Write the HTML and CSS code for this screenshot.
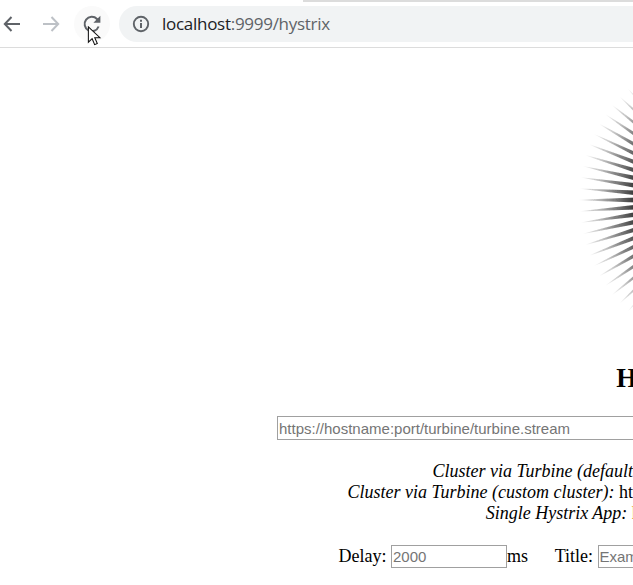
FILE: index.html
```html
<!DOCTYPE html>
<html lang="en">
<head>
    <meta charset="UTF-8">
    <title>Hystrix Dashboard</title>
    <link rel="stylesheet" href="styles.css">
</head>
<body>
    <div class="toolbar">
        <div class="tab-edge"></div>
        <svg class="nav-icon" viewBox="0 0 20 20"><path d="M18 10H3M9.500 3 2.800 10l6.700 7" fill="none" stroke="#5f6368" stroke-width="2"/></svg>
        <svg class="nav-icon" viewBox="0 0 20 20"><path d="M2 10h15M10.500 3l6.700 7-6.700 7" fill="none" stroke="#bdc1c6" stroke-width="2"/></svg>
        <div class="reload">
            <svg class="reload-icon" viewBox="0 0 20 20"><path d="M16.600 12.500A7.200 7.200 0 1 1 15 5l1.600 1.800" fill="none" stroke="#5f6368" stroke-width="2"/><path d="M18.400 1.800v7h-7z" fill="#5f6368"/></svg>
        </div>
        <div class="omnibox">
            <svg class="info-icon" viewBox="0 0 18 18"><circle cx="9" cy="9" r="7.200" fill="none" stroke="#5f6368" stroke-width="1.900"/><path d="M8 8h2v5H8zM8 4.800h2v2H8z" fill="#5f6368"/></svg>
            <span class="host">localhost<span class="url-rest">:9999/hystrix</span></span>
        </div>
        <svg class="cursor" viewBox="0 0 16 24"><path d="M1 1v17.500l4.300-4 2.900 6.800 3-1.300-2.900-6.600h5.900z" fill="#fff" stroke="#111" stroke-width="1.200"/></svg>
    </div>

    <div class="page">
        <svg class="logo" viewBox="0 0 297 262">
            <defs>
                <linearGradient id="ray-fade" gradientUnits="userSpaceOnUse" x1="0" y1="0" x2="58" y2="0">
                    <stop offset="0" stop-color="#1a1a1a" stop-opacity="0"/>
                    <stop offset="0.25" stop-color="#1a1a1a" stop-opacity="0.22"/>
                    <stop offset="0.6" stop-color="#1a1a1a" stop-opacity="0.55"/>
                    <stop offset="1" stop-color="#1a1a1a" stop-opacity="0.9"/>
                </linearGradient>
                <polygon id="ray" points="0,142.800 0,143.200 70,145.900 70,140.100" fill="url(#ray-fade)"/>
                <filter id="soft"><feGaussianBlur stdDeviation="0.700"/></filter>
            </defs>
            <g filter="url(#soft)">
                <use href="#ray" transform="rotate(-47.300 151.500 143)"/>
                <use href="#ray" transform="rotate(-43 151.500 143)"/>
                <use href="#ray" transform="rotate(-38.700 151.500 143)"/>
                <use href="#ray" transform="rotate(-34.400 151.500 143)"/>
                <use href="#ray" transform="rotate(-30.100 151.500 143)"/>
                <use href="#ray" transform="rotate(-25.800 151.500 143)"/>
                <use href="#ray" transform="rotate(-21.500 151.500 143)"/>
                <use href="#ray" transform="rotate(-17.200 151.500 143)"/>
                <use href="#ray" transform="rotate(-12.900 151.500 143)"/>
                <use href="#ray" transform="rotate(-8.600 151.500 143)"/>
                <use href="#ray" transform="rotate(-4.300 151.500 143)"/>
                <use href="#ray"/>
                <use href="#ray" transform="rotate(4.300 151.500 143)"/>
                <use href="#ray" transform="rotate(8.600 151.500 143)"/>
                <use href="#ray" transform="rotate(12.900 151.500 143)"/>
                <use href="#ray" transform="rotate(17.200 151.500 143)"/>
                <use href="#ray" transform="rotate(21.500 151.500 143)"/>
                <use href="#ray" transform="rotate(25.800 151.500 143)"/>
                <use href="#ray" transform="rotate(30.100 151.500 143)"/>
                <use href="#ray" transform="rotate(34.400 151.500 143)"/>
                <use href="#ray" transform="rotate(38.700 151.500 143)"/>
                <use href="#ray" transform="rotate(43 151.500 143)"/>
                <use href="#ray" transform="rotate(47.300 151.500 143)"/>
            </g>
        </svg>
        <h2 class="title">Hystrix Dashboard</h2>
        <input class="stream-input" type="text" placeholder="https://hostname:port/turbine/turbine.stream">
        <div class="hints">
            <div><i>Cluster via Turbine (default cluster):</i> https://turbine-hostname:port/turbine.stream</div>
            <div><i>Cluster via Turbine (custom cluster):</i> https://turbine-hostname:port/turbine.stream?cluster=[clusterName]</div>
            <div><i>Single Hystrix App:</i> <span class="app-url">https://hystrix-app:port/actuator/hystrix.stream</span></div>
        </div>
        <div class="options">
            Delay: <input class="delay-input" type="text" placeholder="2000">ms
            &nbsp;&nbsp;&nbsp;&nbsp;
            Title: <input class="title-input" type="text" placeholder="Example Hystrix App">
        </div>
    </div>
</body>
</html>
```

FILE: styles.css
```css
html, body {
    height: 100%;
    overflow: hidden;
}
body {
    margin: 0;
    background-color: #fff;
    font-family: "Liberation Serif", serif;
    font-size: 18px;
    color: #000;
}
.toolbar {
    position: relative;
    display: flex;
    align-items: center;
    height: 47px;
    border-bottom: 1px solid #dcdcdc;
    padding-left: 2px;
}
.tab-edge {
    position: absolute;
    top: 0;
    left: 303px;
    right: 0;
    height: 2px;
    background-color: #dcdcdc;
}
.nav-icon {
    flex: none;
    width: 20px;
    height: 20px;
    margin-right: 19px;
}
.reload {
    flex: none;
    display: flex;
    align-items: center;
    justify-content: center;
    width: 36px;
    height: 36px;
    margin-left: -6px;
    border-radius: 50%;
    background-color: #fafafa;
}
.reload-icon {
    width: 20px;
    height: 20px;
}
.omnibox {
    display: flex;
    align-items: center;
    flex: none;
    width: 600px;
    height: 36px;
    margin-left: 9px;
    padding-left: 13px;
    border-radius: 18px;
    background-color: #f1f3f4;
}
.info-icon {
    flex: none;
    width: 18px;
    height: 18px;
    margin-right: 12px;
}
.host {
    font-family: "Open Sans", sans-serif;
    font-size: 17px;
    letter-spacing: -0.28px;
    color: #202124;
}
.url-rest {
    color: #5f6368;
}
.cursor {
    position: absolute;
    left: 87px;
    top: 26px;
    width: 15px;
    height: 21px;
}
.page {
    width: 1454px;
    padding-top: 9px;
    text-align: center;
}
.logo {
    display: block;
    width: 297px;
    height: 262px;
    margin: 0 auto;
}
.title {
    margin: 44px 0 22px;
    font-size: 27px;
    line-height: 31px;
}
input {
    box-sizing: border-box;
    border: 1px solid #a0a0a0;
    padding: 1px;
    font-family: "Liberation Sans", sans-serif;
    font-size: 15px;
    background-color: #fff;
}
input::placeholder {
    color: #757575;
}
.stream-input {
    display: block;
    width: 900px;
    height: 24px;
    margin: 0 auto;
}
.hints {
    margin-top: 21px;
    line-height: 21px;
}
.app-url {
    color: #e8890c;
}
.options {
    margin-top: 21px;
    white-space: nowrap;
}
.delay-input {
    width: 116px;
    height: 23px;
}
.title-input {
    width: 518px;
    height: 23px;
}
```
